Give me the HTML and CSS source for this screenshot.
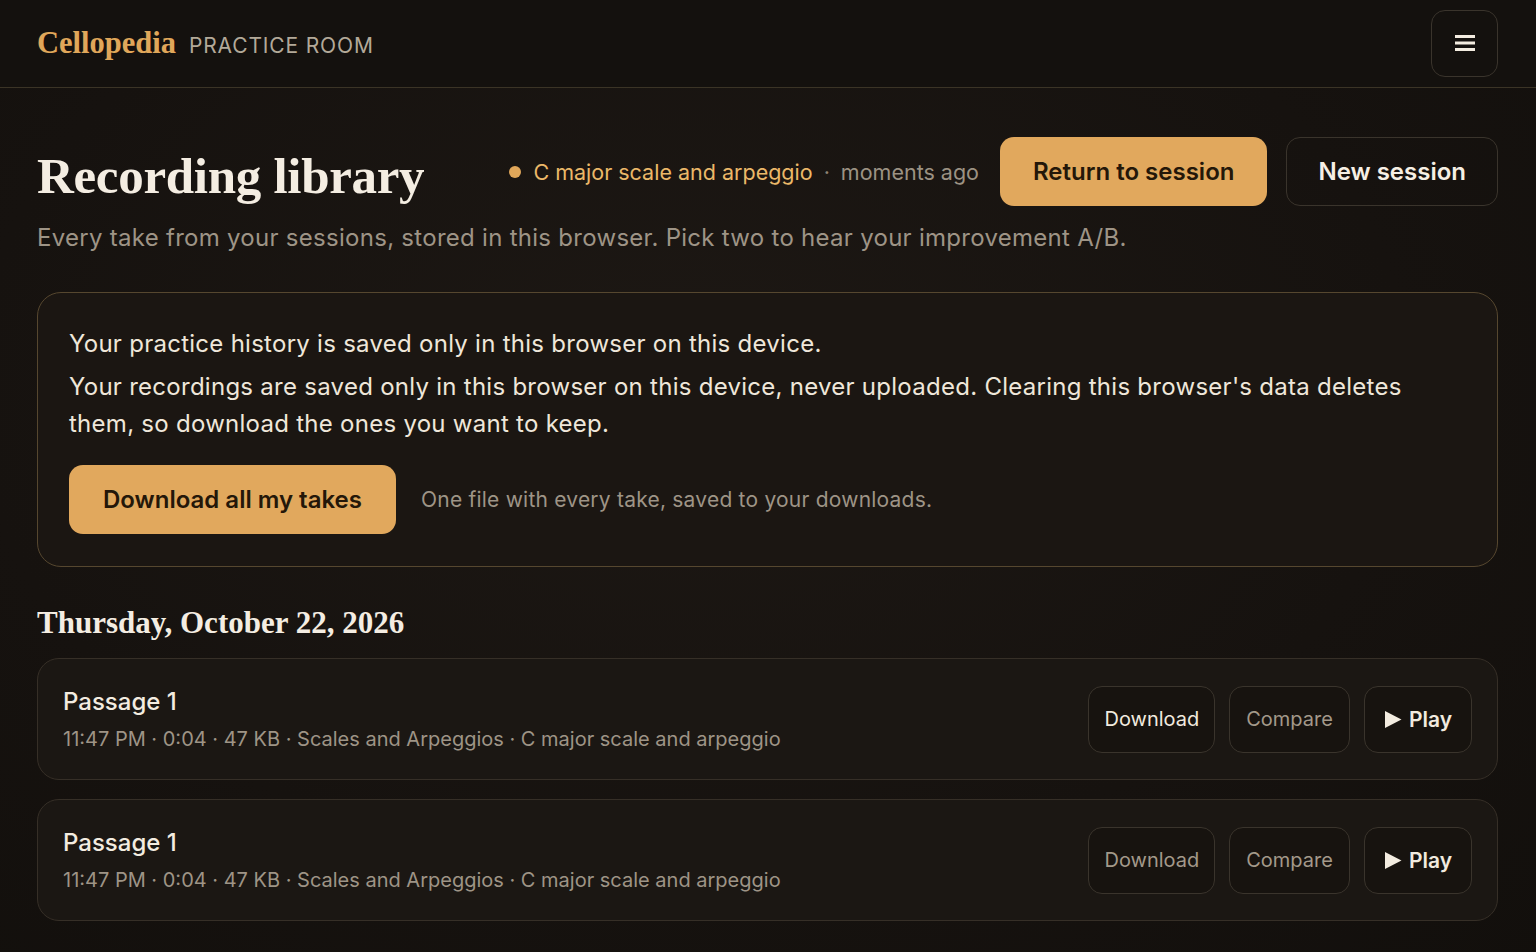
FILE: index.html
```html
<!DOCTYPE html>
<html lang="en">
  <head>
    <meta charset="UTF-8" />
    <title>Recording library · Cellopedia</title>
    <link rel="stylesheet" href="styles.css">
  </head>
  <body>
    <header class="topbar">
      <div class="brand">
        <span class="brand-name">Cellopedia</span>
        <span class="brand-sub">PRACTICE ROOM</span>
      </div>
      <button class="menu-btn" aria-label="Menu">
        <svg width="22" height="18" viewBox="0 0 22 18">
          <rect x="1" y="1" width="20" height="3" fill="#f3ece0" />
          <rect x="1" y="7.5" width="20" height="3" fill="#f3ece0" />
          <rect x="1" y="14" width="20" height="3" fill="#f3ece0" />
        </svg>
      </button>
    </header>

    <main class="page">
      <div class="page-head">
        <h1>Recording library</h1>
        <div class="head-right">
          <div class="last-session">
            <span class="dot"></span>
            <span class="last-title">C major scale and arpeggio</span>
            <span class="sep">·</span>
            <span class="last-time">moments ago</span>
          </div>
          <button class="btn btn-primary">Return to session</button>
          <button class="btn btn-outline">New session</button>
        </div>
      </div>
      <p class="lede">Every take from your sessions, stored in this browser. Pick two to hear your improvement A/B.</p>

      <section class="notice">
        <p>Your practice history is saved only in this browser on this device.</p>
        <p>Your recordings are saved only in this browser on this device, never uploaded. Clearing this browser's data deletes them, so download the ones you want to keep.</p>
        <div class="notice-actions">
          <button class="btn btn-primary">Download all my takes</button>
          <span class="hint">One file with every take, saved to your downloads.</span>
        </div>
      </section>

      <h2 class="day">Thursday, October 22, 2026</h2>

      <div class="take">
        <div class="take-info">
          <div class="take-name">Passage 1</div>
          <div class="take-meta">11:47 PM · 0:04 · 47 KB · Scales and Arpeggios · C major scale and arpeggio</div>
        </div>
        <div class="take-actions">
          <button class="small-btn">Download</button>
          <button class="small-btn muted">Compare</button>
          <button class="small-btn play">
            <svg width="18" height="19" viewBox="0 0 18 19"><path d="M1 1 L17.5 9.5 L1 18 Z" fill="#f3ece0" /></svg>
            Play
          </button>
        </div>
      </div>

      <div class="take">
        <div class="take-info">
          <div class="take-name">Passage 1</div>
          <div class="take-meta">11:47 PM · 0:04 · 47 KB · Scales and Arpeggios · C major scale and arpeggio</div>
        </div>
        <div class="take-actions">
          <button class="small-btn muted">Download</button>
          <button class="small-btn muted">Compare</button>
          <button class="small-btn play">
            <svg width="18" height="19" viewBox="0 0 18 19"><path d="M1 1 L17.5 9.5 L1 18 Z" fill="#f3ece0" /></svg>
            Play
          </button>
        </div>
      </div>
    </main>
  </body>
</html>
```

FILE: styles.css
```css
* {
  box-sizing: border-box;
}
body {
  margin: 0;
  font-family: Inter, "Noto Sans", sans-serif;
  color: #efe7da;
  background: radial-gradient(ellipse at 45% 40%, #1d1814 0%, #16120f 60%, #120f0c 100%);
  min-height: 952px;
}
button {
  font-family: inherit;
  cursor: pointer;
}

/* top bar */
.topbar {
  height: 88px;
  padding: 0 38px 0 37px;
  display: flex;
  align-items: center;
  justify-content: space-between;
  background: #14110e;
  border-bottom: 1px solid #3b3426;
}
.brand {
  display: flex;
  align-items: baseline;
  gap: 13px;
}
.brand-name {
  font-family: "Liberation Serif", "DejaVu Serif", serif;
  font-weight: bold;
  font-size: 30.5px;
  color: #e0a75a;
}
.brand-sub {
  font-size: 21px;
  letter-spacing: 0.85px;
  color: #b3a999;
}
.menu-btn {
  width: 67px;
  height: 67px;
  border-radius: 14px;
  border: 1.5px solid #3a342c;
  background: transparent;
  display: flex;
  align-items: center;
  justify-content: center;
  padding: 0;
  margin-top: -1px;
}

/* page */
.page {
  padding: 49px 38px 30px 37px;
}
.page-head {
  display: flex;
  align-items: center;
  justify-content: space-between;
}
h1 {
  margin: 0;
  font-family: "Liberation Serif", "DejaVu Serif", serif;
  font-weight: bold;
  font-size: 51px;
  color: #f4ede2;
  letter-spacing: -0.3px;
  margin-top: 8px;
}
.head-right {
  display: flex;
  align-items: center;
  gap: 19px;
}
.last-session {
  display: flex;
  align-items: center;
  font-size: 21.5px;
  margin-right: 2px;
}
.dot {
  width: 12px;
  height: 12px;
  border-radius: 50%;
  background: #e0a75a;
  margin-right: 12px;
}
.last-title {
  color: #ebb869;
}
.sep {
  color: #8e8475;
  margin: 0 11px;
}
.last-time {
  color: #9c9283;
}
.btn {
  height: 69px;
  padding: 0 33px;
  border-radius: 14px;
  font-size: 24px;
  font-weight: 600;
}
.btn-primary {
  background: #e1a85d;
  color: #241709;
  border: none;
}
.btn-outline {
  background: transparent;
  color: #f6efe4;
  border: 1.5px solid #3a342c;
  padding: 0 31px;
}
.lede {
  margin: 17px 0 0;
  font-size: 24px;
  letter-spacing: 0.28px;
  color: #9e9486;
}

/* local storage notice */
.notice {
  margin-top: 40px;
  border: 1.5px solid #56472f;
  border-radius: 24px;
  background: #1b1612;
  padding: 32px 31px 32px;
}
.notice p {
  margin: 0 0 6px;
  font-size: 24px;
  line-height: 37px;
  letter-spacing: 0.27px;
  color: #efe7da;
}
.notice-actions {
  display: flex;
  align-items: center;
  gap: 25px;
  margin-top: 23px;
}
.notice-actions .btn {
  padding: 0 34px;
}
.hint {
  font-size: 21px;
  letter-spacing: 0.22px;
  color: #9e9486;
}

/* day list */
.day {
  margin: 38px 0 17px;
  font-family: "Liberation Serif", "DejaVu Serif", serif;
  font-weight: bold;
  font-size: 31px;
  color: #f4ede2;
}
.take {
  display: flex;
  align-items: center;
  justify-content: space-between;
  height: 122px;
  padding: 0 25px 0 25px;
  border: 1.5px solid #362f27;
  border-radius: 22px;
  background: #1b1713;
  margin-bottom: 19px;
}
.take-name {
  font-size: 24px;
  font-weight: 500;
  color: #f3ece0;
}
.take-meta {
  margin-top: 11px;
  font-size: 20px;
  color: #9e9486;
}
.take-actions {
  display: flex;
  gap: 14px;
}
.small-btn {
  height: 67px;
  padding: 0 15px;
  border-radius: 14px;
  border: 1.5px solid #3a342c;
  background: #17130f;
  color: #f1eadf;
  font-size: 20px;
  display: flex;
  align-items: center;
}
.small-btn.muted {
  color: #a3998a;
}
.small-btn + .small-btn.muted {
  padding: 0 16px;
}
.small-btn.play {
  font-size: 21px;
  font-weight: 600;
  gap: 7px;
  padding: 0 19px 0 19px;
}
```
